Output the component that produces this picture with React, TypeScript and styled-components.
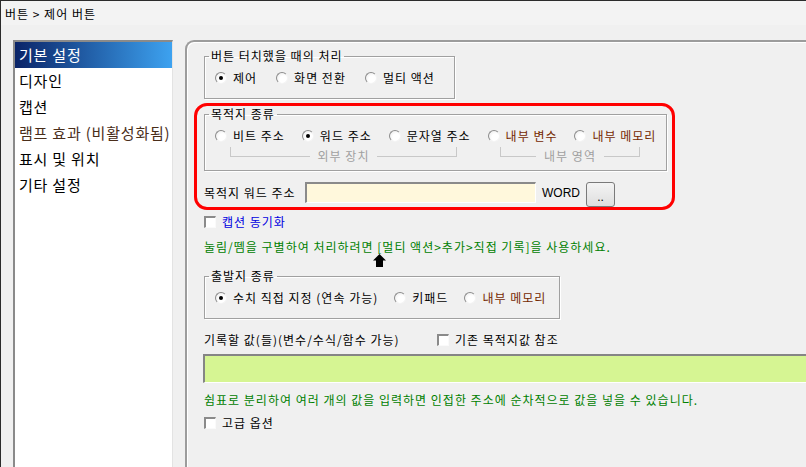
import styled, { createGlobalStyle } from "styled-components";

const GlobalStyle = createGlobalStyle`
  body {
    margin: 0;
    background: #f0f0f0;
    font-family: "Noto Sans CJK KR", "Noto Sans", sans-serif;
  }
`;

const Window = styled.div`
  width: 806px;
  height: 467px;
  box-sizing: border-box;
  overflow: hidden;
  display: flex;
  flex-direction: column;
  border-top: 1px solid #2b2b2b;
  border-left: 1px solid #2b2b2b;
  background: #f0f0f0;
  font-size: 12px;
  letter-spacing: 1px;
  color: #000;
`;

const TitleBar = styled.div`
  height: 24px;
  flex-shrink: 0;
  display: flex;
  align-items: center;
  padding-left: 4px;
  background: #f3f3f3;
  font-size: 12px;
`;

const Body = styled.div`
  flex: 1;
  display: flex;
  gap: 12px;
  padding: 15px 0 0 12px;
  min-height: 0;
`;

const NavList = styled.ul`
  width: 157px;
  flex-shrink: 0;
  margin: 0;
  padding: 0;
  list-style: none;
  background: #fff;
  border-top: 2px solid #8a8a8a;
  border-left: 2px solid #8a8a8a;
  border-right: 1px solid #e3e3e3;
  font-size: 15px;
  letter-spacing: 0.8px;
`;

const NavItem = styled.li<{ $selected?: boolean; $muted?: boolean }>`
  height: 26px;
  line-height: 26px;
  padding-left: 4px;
  white-space: nowrap;
  color: ${(p) => (p.$selected ? "#fff" : p.$muted ? "#4a2e1a" : "#000")};
  background: ${(p) =>
    p.$selected ? "linear-gradient(to right, #0a2468, #3da2f0)" : "transparent"};
`;

const Panel = styled.div`
  flex: 1;
  min-width: 0;
  border-top: 2px solid #9c9c9c;
  border-left: 2px solid #9c9c9c;
  border-top-left-radius: 9px;
  box-shadow: inset 1px 1px 0 #fff;
  overflow: hidden;
`;

const Content = styled.div`
  display: flex;
  flex-direction: column;
  align-items: flex-start;
  padding: 7px 0 0 17px;
`;

const GroupBox = styled.fieldset<{ $width: number; $top?: number }>`
  box-sizing: border-box;
  width: ${(p) => p.$width}px;
  margin: ${(p) => p.$top ?? 0}px 0 0 0;
  padding: 8px 0 13px 10px;
  border: 1px solid #a0a0a0;
  box-shadow: inset 1px 1px 0 #fff, 1px 1px 0 #fff;
  min-inline-size: 0;
`;

const Legend = styled.legend`
  margin-left: -6px;
  padding: 0 2px;
  line-height: 14px;
  font-size: 12px;
`;

const RadioRow = styled.div<{ $gap: number }>`
  display: flex;
  align-items: center;
  gap: ${(p) => p.$gap}px;
  height: 14px;
`;

const RadioItem = styled.label<{ $color?: string }>`
  display: flex;
  align-items: center;
  gap: 6px;
  line-height: 14px;
  white-space: nowrap;
  color: ${(p) => p.$color ?? "#000"};
`;

const RadioMark = styled.span<{ $checked?: boolean }>`
  position: relative;
  width: 12px;
  height: 12px;
  box-sizing: border-box;
  border-radius: 50%;
  border: 1px solid;
  border-color: #8c8c8c #f4f4f4 #f4f4f4 #8c8c8c;
  background: radial-gradient(circle at 65% 65%, #fff 40%, #e6e6e6 100%);
  flex-shrink: 0;

  &::after {
    content: "";
    display: ${(p) => (p.$checked ? "block" : "none")};
    position: absolute;
    left: 3px;
    top: 3px;
    width: 4px;
    height: 4px;
    border-radius: 50%;
    background: #000;
  }
`;

const Highlight = styled.div`
  margin: 4px 0 0 -10px;
  padding: 1px 5px 0 7px;
  border: 3px solid #ff0000;
  border-radius: 13px;
`;

const BracketRow = styled.div`
  display: flex;
  height: 10px;
  margin-top: 4px;
`;

const Bracket = styled.div<{ $left: number; $width: number }>`
  display: flex;
  align-items: flex-start;
  margin-left: ${(p) => p.$left}px;
  width: ${(p) => p.$width}px;
  height: 10px;
`;

const BracketLine = styled.span<{ $side: "left" | "right" }>`
  flex: 1;
  height: 9px;
  border-bottom: 1px solid #c8c8c8;
  border-${(p) => p.$side}: 1px solid #c8c8c8;
`;

const BracketText = styled.span`
  margin-top: 3px;
  padding: 0 8px;
  line-height: 12px;
  color: #a0a0a0;
  white-space: nowrap;
`;

const FieldRow = styled.div`
  display: flex;
  align-items: flex-start;
  margin-top: 11px;
`;

const FieldLabel = styled.span<{ $width?: number }>`
  width: ${(p) => (p.$width ? `${p.$width}px` : "auto")};
  line-height: 22px;
  white-space: nowrap;
`;

const AddressInput = styled.div`
  width: 231px;
  height: 21px;
  box-sizing: border-box;
  margin-left: 3px;
  background: #fff8dc;
  border-top: 2px solid #8a8a8a;
  border-left: 2px solid #8a8a8a;
  border-right: 1px solid #fff;
  border-bottom: 1px solid #fff;
`;

const UnitLabel = styled.span`
  margin: 0 6px;
  line-height: 22px;
  font-family: "Liberation Sans", sans-serif;
  font-size: 12px;
  letter-spacing: 0;
`;

const BrowseButton = styled.button`
  width: 29px;
  height: 25px;
  padding: 0;
  border: 1px solid #7a7a7a;
  border-radius: 3px;
  background: linear-gradient(#f4f4f4, #dedede);
  font-family: "Liberation Sans", sans-serif;
  font-size: 12px;
  line-height: 28px;
  color: #000;
`;

const CheckRow = styled.label<{ $top: number; $color?: string }>`
  display: flex;
  align-items: center;
  gap: 6px;
  height: 14px;
  margin-top: ${(p) => p.$top}px;
  line-height: 14px;
  white-space: nowrap;
  color: ${(p) => p.$color ?? "#000"};
`;

const CheckMark = styled.span`
  width: 12px;
  height: 12px;
  box-sizing: border-box;
  background: #fff;
  border-top: 2px solid #8a8a8a;
  border-left: 2px solid #8a8a8a;
  border-right: 1px solid #fafafa;
  border-bottom: 1px solid #fafafa;
  flex-shrink: 0;
`;

const HintText = styled.div<{ $top: number }>`
  margin-top: ${(p) => p.$top}px;
  line-height: 14px;
  color: #008000;
  white-space: nowrap;
`;

const ArrowMark = styled.svg`
  display: block;
  margin-left: 169px;
`;

const ValueRow = styled.div`
  display: flex;
  align-items: center;
  height: 14px;
  margin-top: 14px;
`;

const ValueInput = styled.div`
  width: 700px;
  height: 29px;
  box-sizing: border-box;
  margin: 7px 0 0 -1px;
  background: #d6f593;
  border-top: 2px solid #858585;
  border-left: 2px solid #858585;
  border-bottom: 1px solid #fff;
`;

const navItems = ["기본 설정", "디자인", "캡션", "램프 효과 (비활성화됨)", "표시 및 위치", "기타 설정"];

const BROWN = "#742800";

export default function App() {
  return (
    <>
      <GlobalStyle />
      <Window>
        <TitleBar>버튼 &gt; 제어 버튼</TitleBar>
        <Body>
          <NavList>
            {navItems.map((item, i) => (
              <NavItem key={item} $selected={i === 0} $muted={i === 3}>
                {item}
              </NavItem>
            ))}
          </NavList>
          <Panel>
            <Content>
              <GroupBox $width={251}>
                <Legend>버튼 터치했을 때의 처리</Legend>
                <RadioRow $gap={19}>
                  <RadioItem>
                    <RadioMark $checked />
                    제어
                  </RadioItem>
                  <RadioItem>
                    <RadioMark />
                    화면 전환
                  </RadioItem>
                  <RadioItem>
                    <RadioMark />
                    멀티 액션
                  </RadioItem>
                </RadioRow>
              </GroupBox>

              <Highlight>
                <GroupBox $width={463}>
                  <Legend>목적지 종류</Legend>
                  <RadioRow $gap={17}>
                    <RadioItem>
                      <RadioMark />
                      비트 주소
                    </RadioItem>
                    <RadioItem>
                      <RadioMark $checked />
                      워드 주소
                    </RadioItem>
                    <RadioItem>
                      <RadioMark />
                      문자열 주소
                    </RadioItem>
                    <RadioItem $color={BROWN}>
                      <RadioMark />
                      내부 변수
                    </RadioItem>
                    <RadioItem $color={BROWN}>
                      <RadioMark />
                      내부 메모리
                    </RadioItem>
                  </RadioRow>
                  <BracketRow>
                    <Bracket $left={15} $width={227}>
                      <BracketLine $side="left" />
                      <BracketText>외부 장치</BracketText>
                      <BracketLine $side="right" />
                    </Bracket>
                    <Bracket $left={43} $width={140}>
                      <BracketLine $side="left" />
                      <BracketText>내부 영역</BracketText>
                      <BracketLine $side="right" />
                    </Bracket>
                  </BracketRow>
                </GroupBox>
                <FieldRow>
                  <FieldLabel $width={98}>목적지 워드 주소</FieldLabel>
                  <AddressInput />
                  <UnitLabel>WORD</UnitLabel>
                  <BrowseButton>..</BrowseButton>
                </FieldRow>
              </Highlight>

              <CheckRow $top={5} $color="#0000e0">
                <CheckMark />
                캡션 동기화
              </CheckRow>
              <HintText $top={11}>
                눌림/뗌을 구별하여 처리하려면 [멀티 액션&gt;추가&gt;직접 기록]을 사용하세요.
              </HintText>
              <ArrowMark width="13" height="13" viewBox="0 0 13 13">
                <path d="M6.5 0 L13 6.5 L10 6.5 L10 13 L3 13 L3 6.5 L0 6.5 Z" fill="#000" />
              </ArrowMark>

              <GroupBox $width={356} $top={2}>
                <Legend>출발지 종류</Legend>
                <RadioRow $gap={16}>
                  <RadioItem>
                    <RadioMark $checked />
                    수치 직접 지정 (연속 가능)
                  </RadioItem>
                  <RadioItem>
                    <RadioMark />
                    키패드
                  </RadioItem>
                  <RadioItem $color={BROWN}>
                    <RadioMark />
                    내부 메모리
                  </RadioItem>
                </RadioRow>
              </GroupBox>

              <ValueRow>
                <FieldLabel $width={233}>기록할 값(들)(변수/수식/함수 가능)</FieldLabel>
                <CheckRow $top={0}>
                  <CheckMark />
                  기존 목적지값 참조
                </CheckRow>
              </ValueRow>
              <ValueInput />
              <HintText $top={10}>
                쉼표로 분리하여 여러 개의 값을 입력하면 인접한 주소에 순차적으로 값을 넣을 수 있습니다.
              </HintText>
              <CheckRow $top={9}>
                <CheckMark />
                고급 옵션
              </CheckRow>
            </Content>
          </Panel>
        </Body>
      </Window>
    </>
  );
}
